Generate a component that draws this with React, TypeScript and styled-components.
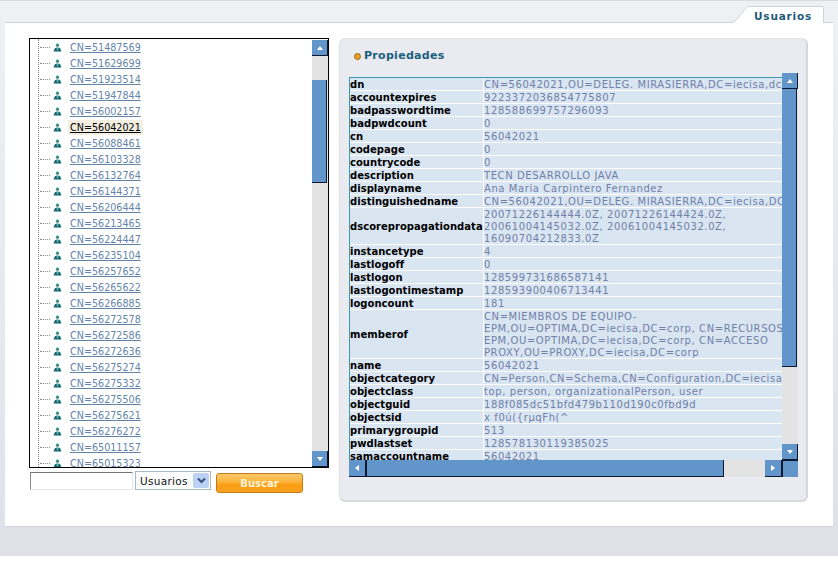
import React from "react";
import styled, { createGlobalStyle } from "styled-components";

const treeItems = [
  "51487569", "51629699", "51923514", "51947844", "56002157", "56042021", "56088461",
  "56103328", "56132764", "56144371", "56206444", "56213465", "56224447", "56235104",
  "56257652", "56265622", "56266885", "56272578", "56272586", "56272636", "56275274",
  "56275332", "56275506", "56275621", "56276272", "65011157", "65015323",
];

const properties: { name: string; lines: string[] }[] = [
  { name: "dn", lines: ["CN=56042021,OU=DELEG. MIRASIERRA,DC=iecisa,dc=corp"] },
  { name: "accountexpires", lines: ["9223372036854775807"] },
  { name: "badpasswordtime", lines: ["128588699757296093"] },
  { name: "badpwdcount", lines: ["0"] },
  { name: "cn", lines: ["56042021"] },
  { name: "codepage", lines: ["0"] },
  { name: "countrycode", lines: ["0"] },
  { name: "description", lines: ["TECN DESARROLLO JAVA"] },
  { name: "displayname", lines: ["Ana Maria Carpintero Fernandez"] },
  { name: "distinguishedname", lines: ["CN=56042021,OU=DELEG. MIRASIERRA,DC=iecisa,DC=corp"] },
  {
    name: "dscorepropagationdata",
    lines: ["20071226144444.0Z, 20071226144424.0Z,", "20061004145032.0Z, 20061004145032.0Z,", "16090704212833.0Z"],
  },
  { name: "instancetype", lines: ["4"] },
  { name: "lastlogoff", lines: ["0"] },
  { name: "lastlogon", lines: ["128599731686587141"] },
  { name: "lastlogontimestamp", lines: ["128593900406713441"] },
  { name: "logoncount", lines: ["181"] },
  {
    name: "memberof",
    lines: [
      "CN=MIEMBROS DE EQUIPO-",
      "EPM,OU=OPTIMA,DC=iecisa,DC=corp, CN=RECURSOS",
      "EPM,OU=OPTIMA,DC=iecisa,DC=corp, CN=ACCESO",
      "PROXY,OU=PROXY,DC=iecisa,DC=corp",
    ],
  },
  { name: "name", lines: ["56042021"] },
  { name: "objectcategory", lines: ["CN=Person,CN=Schema,CN=Configuration,DC=iecisa,DC=corp"] },
  { name: "objectclass", lines: ["top, person, organizationalPerson, user"] },
  { name: "objectguid", lines: ["188f085dc51bfd479b110d190c0fbd9d"] },
  { name: "objectsid", lines: ["x f0ú({rµqFh(^"] },
  { name: "primarygroupid", lines: ["513"] },
  { name: "pwdlastset", lines: ["128578130119385025"] },
  { name: "samaccountname", lines: ["56042021"] },
];

const GlobalStyle = createGlobalStyle`
  html, body {
    margin: 0;
    padding: 0;
    background: #ffffff;
    font-family: "DejaVu Sans", Verdana, sans-serif;
  }
`;

const Page = styled.div`
  width: 838px;
  height: 556px;
  background: linear-gradient(#eff0f3 0%, #e6e8ee 60%, #dfe1e9 100%);
  border-top: 1px solid #d8dae0;
  box-sizing: border-box;
  display: flex;
  flex-direction: column;
  overflow: hidden;
`;

const TabBar = styled.div`
  height: 21px;
  padding-right: 14px;
  box-sizing: border-box;
  display: flex;
  justify-content: flex-end;
  align-items: flex-end;
`;

const TabCorner = styled.svg`
  width: 16px;
  height: 17px;
  display: block;
  position: relative;
  z-index: 1;
  margin-bottom: -1px;
`;

const Tab = styled.div`
  height: 17px;
  width: 76px;
  margin-bottom: -1px;
  position: relative;
  z-index: 1;
  box-sizing: border-box;
  padding: 3px 0 0 6px;
  background: #ffffff;
  border-top: 1px solid #d0d3da;
  border-right: 1px solid #d0d3da;
  border-top-right-radius: 2px;
  color: #1f5a78;
  font-size: 10.5px;
  font-weight: bold;
  letter-spacing: 0.8px;
  line-height: 13px;
`;

const Content = styled.div`
  width: 828px;
  height: 505px;
  margin-left: 5px;
  box-sizing: border-box;
  background: #ffffff;
  border-top: 1px solid #cfd2d9;
  border-bottom: 1px solid #cfd2d9;
  padding: 15px 25px 0 24px;
  display: flex;
  gap: 10px;
  align-items: flex-start;
`;

const LeftColumn = styled.div`
  width: 300px;
  display: flex;
  flex-direction: column;
`;

const TreeBox = styled.div`
  width: 300px;
  height: 430px;
  box-sizing: border-box;
  border: 1px solid #000000;
  display: flex;
  overflow: hidden;
`;

const TreeViewport = styled.div`
  flex: 1;
  overflow: hidden;
  margin-left: 8px;
  border-left: 1px dotted #8a8a8a;
`;

const TreeRow = styled.div`
  height: 16px;
  display: flex;
  align-items: center;
`;

const TreeDots = styled.span`
  width: 10px;
  margin-left: 1px;
  border-top: 1px dotted #8a8a8a;
`;

const PersonSvg = styled.svg`
  width: 9px;
  height: 9px;
  margin-left: 3px;
  display: block;
`;

const TreeLink = styled.a<{ $selected?: boolean }>`
  margin-left: 6px;
  padding: 1px 2px;
  font-size: 9.6px;
  line-height: 13px;
  text-decoration: underline;
  color: ${(p) => (p.$selected ? "#000000" : "#6484a8")};
  background: ${(p) => (p.$selected ? "#f2eee0" : "transparent")};
`;

const VScrollbar = styled.div<{ $inset?: boolean }>`
  width: 16px;
  flex: none;
  display: flex;
  flex-direction: column;
  background: #e3e3e3;
  ${(p) => (p.$inset ? "border-top: 1px solid #ffffff;" : "")}
`;

const ArrowButton = styled.div`
  width: 15px;
  height: 15px;
  flex: none;
  background: #6295c9;
  border-right: 1px solid #0c1830;
  border-bottom: 1px solid #0c1830;
  display: flex;
  align-items: center;
  justify-content: center;
`;

const ArrowSvg = styled.svg`
  width: 8px;
  height: 8px;
  display: block;
`;

const Track = styled.div<{ $size: number }>`
  flex: 0 0 ${(p) => p.$size}px;
`;

const Thumb = styled.div<{ $size: number }>`
  flex: 0 0 ${(p) => p.$size}px;
  box-sizing: border-box;
  width: 15px;
  background: #6295c9;
  border-right: 1px solid #0c1830;
  border-bottom: 1px solid #0c1830;
`;

const SearchBar = styled.form`
  margin-top: 3px;
  display: flex;
  align-items: flex-start;
  padding-left: 1px;
`;

const SearchInput = styled.input`
  width: 103px;
  height: 18px;
  margin: 1px 0 0;
  padding: 0;
  box-sizing: border-box;
  background: #ffffff;
  border: 1px solid #e6e6e6;
  border-top: 1px solid #77756c;
  border-left: 1px solid #8a887f;
`;

const FakeSelect = styled.div`
  width: 76px;
  height: 19px;
  margin-left: 2px;
  box-sizing: border-box;
  border: 1px solid #a9b8c9;
  padding-left: 4px;
  display: flex;
  align-items: center;
  justify-content: space-between;
  font-size: 10.5px;
  letter-spacing: 0.3px;
  color: #111111;
`;

const SelectArrow = styled.span`
  width: 16px;
  height: 15px;
  margin-right: 1px;
  background: #bcd0f3;
  border-radius: 2px;
  display: flex;
  align-items: center;
  justify-content: center;
`;

const SearchButton = styled.button`
  width: 87px;
  height: 20px;
  margin: 2px 0 0 5px;
  padding: 0;
  border: 1px solid #c47a1a;
  border-radius: 3px;
  background: linear-gradient(#fcc868 0%, #fbb33c 45%, #fb9d13 60%, #f9a21f 100%);
  color: #fff3d8;
  font-family: "DejaVu Sans", Verdana, sans-serif;
  font-size: 10px;
  font-weight: bold;
`;

const Panel = styled.section`
  width: 469px;
  height: 464px;
  box-sizing: border-box;
  background: #e9ebf0;
  border: 1px solid #e0e2e8;
  border-right: 2px solid #d6d8de;
  border-bottom: 2px solid #d6d8de;
  border-radius: 6px;
  padding: 10px 9px 0 9px;
`;

const PanelTitle = styled.h2`
  margin: 0 0 14px;
  height: 14px;
  display: flex;
  align-items: center;
  gap: 3px;
  padding-left: 5px;
  font-size: 11px;
  line-height: 14px;
  font-weight: bold;
  letter-spacing: 0.3px;
  color: #1c5f7c;
`;

const Bullet = styled.span`
  width: 5px;
  height: 5px;
  border-radius: 50%;
  background: #f0a020;
  border: 1px solid #8c6a20;
`;

const Grid = styled.div`
  display: grid;
  grid-template-columns: 433px 16px;
  grid-template-rows: 387px 17px;
  margin-top: -4px;
`;

const TableViewport = styled.div`
  overflow: hidden;
  margin-top: 4px;
  height: 383px;
  border-top: 1px solid #3a9ab4;
  border-left: 1px solid #3a9ab4;
  box-sizing: border-box;
`;

const PropRow = styled.div`
  width: 600px;
  display: flex;
  align-items: stretch;
  background: #d9e5f1;
  border-bottom: 1px solid #ffffff;
  box-sizing: border-box;
`;

const PropName = styled.div`
  width: 133px;
  flex: none;
  display: flex;
  align-items: center;
  padding-top: 1px;
  margin-bottom: -1px;
  font-size: 10px;
  line-height: 12px;
  font-weight: bold;
  color: #000000;
  letter-spacing: 0.03px;
`;

const PropValue = styled.div`
  border-left: 1px solid #ffffff;
  padding-top: 1px;
  margin-bottom: -1px;
  font-size: 10px;
  line-height: 12px;
  letter-spacing: 0.59px;
  color: #7080a8;
  white-space: nowrap;
`;

const PropLine = styled.div``;

const HScrollbar = styled.div`
  height: 17px;
  display: flex;
  background: #e3e3e3;
`;

const HButton = styled(ArrowButton)`
  width: 17px;
  height: 17px;
  box-sizing: border-box;
`;

const HThumb = styled.div`
  flex: 0 0 358px;
  height: 17px;
  box-sizing: border-box;
  background: #6295c9;
  border-left: 1px solid #0c1830;
  border-right: 1px solid #0c1830;
  border-bottom: 1px solid #0c1830;
`;

const Corner = styled.div`
  width: 16px;
  height: 17px;
  background: #6295c9;
  border-top: 1px solid #0c1830;
  border-left: 1px solid #0c1830;
  box-sizing: border-box;
`;

const Spacer = styled.div`
  flex: 1;
`;

function Arrow({ dir }: { dir: "up" | "down" | "left" | "right" }) {
  const points = {
    up: "1,6 7,6 4,2",
    down: "1,2 7,2 4,6",
    left: "6,1 6,7 2,4",
    right: "2,1 2,7 6,4",
  }[dir];
  return (
    <ArrowSvg viewBox="0 0 8 8">
      <polygon points={points} fill="#ffffff" />
    </ArrowSvg>
  );
}

function PersonIcon() {
  return (
    <PersonSvg viewBox="0 0 9 9">
      <circle cx="4.5" cy="2.2" r="1.6" fill="#2d8f8a" />
      <path d="M0.5 8.5 L2 5 L4.5 4.4 L7 5 L8.5 8.5 Z" fill="#0f6b6b" />
      <path d="M3.8 5.4 L5.2 5.4 L5.2 6.6 L3.8 6.6 Z" fill="#d7f0ee" />
    </PersonSvg>
  );
}

export default function App() {
  return (
    <>
      <GlobalStyle />
      <Page>
        <TabBar>
          <TabCorner viewBox="0 0 16 17">
            <path d="M0 17 C6 15 10 5 16 0.5 L16 17 Z" fill="#ffffff" />
            <path d="M0 16.5 C6 15 10 5 16 0.5" fill="none" stroke="#d0d3da" />
          </TabCorner>
          <Tab>Usuarios</Tab>
        </TabBar>
        <Content>
          <LeftColumn>
            <TreeBox>
              <TreeViewport>
                {treeItems.map((id) => (
                  <TreeRow key={id}>
                    <TreeDots />
                    <PersonIcon />
                    <TreeLink $selected={id === "56042021"}>CN={id}</TreeLink>
                  </TreeRow>
                ))}
              </TreeViewport>
              <VScrollbar $inset>
                <ArrowButton>
                  <Arrow dir="up" />
                </ArrowButton>
                <Track $size={24} />
                <Thumb $size={103} />
                <Spacer />
                <ArrowButton>
                  <Arrow dir="down" />
                </ArrowButton>
              </VScrollbar>
            </TreeBox>
            <SearchBar>
              <SearchInput />
              <FakeSelect>
                Usuarios
                <SelectArrow>
                  <svg width="9" height="7" viewBox="0 0 9 7">
                    <path d="M1 1.5 L4.5 5 L8 1.5" fill="none" stroke="#34507f" strokeWidth="2" />
                  </svg>
                </SelectArrow>
              </FakeSelect>
              <SearchButton type="button">Buscar</SearchButton>
            </SearchBar>
          </LeftColumn>
          <Panel>
            <PanelTitle>
              <Bullet />
              Propiedades
            </PanelTitle>
            <Grid>
              <TableViewport>
                {properties.map((prop) => (
                  <PropRow key={prop.name}>
                    <PropName>{prop.name}</PropName>
                    <PropValue>
                      {prop.lines.map((line) => (
                        <PropLine key={line}>{line}</PropLine>
                      ))}
                    </PropValue>
                  </PropRow>
                ))}
              </TableViewport>
              <VScrollbar>
                <ArrowButton>
                  <Arrow dir="up" />
                </ArrowButton>
                <Thumb $size={278} />
                <Spacer />
                <ArrowButton>
                  <Arrow dir="down" />
                </ArrowButton>
              </VScrollbar>
              <HScrollbar>
                <HButton>
                  <Arrow dir="left" />
                </HButton>
                <HThumb />
                <Spacer />
                <HButton>
                  <Arrow dir="right" />
                </HButton>
              </HScrollbar>
              <Corner />
            </Grid>
          </Panel>
        </Content>
      </Page>
    </>
  );
}
